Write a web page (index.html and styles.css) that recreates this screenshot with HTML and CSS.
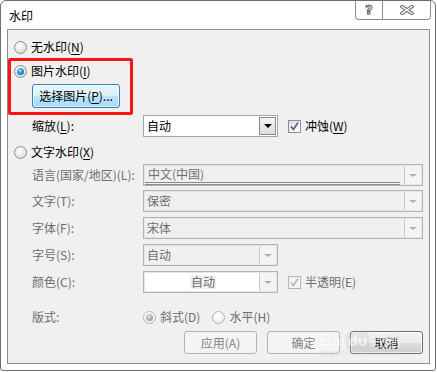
FILE: index.html
```html
<!DOCTYPE html>
<html>
<head>
  <meta charset="utf-8">
  <title>水印</title>
  <link rel="stylesheet" href="styles.css">
</head>
<body>
  <div class="window">
    <div class="titlebar">
      <span class="title">水印</span>
      <div class="caption-buttons">
        <span class="cap-btn help-btn">?</span>
        <span class="cap-btn close-btn">
          <svg width="14" height="10" viewBox="0 0 14 10">
            <path d="M2 1.5 L12 8.5 M12 1.5 L2 8.5" stroke="#6a6a6a" stroke-width="3.4" stroke-linecap="square" fill="none"/>
            <path d="M2 1.5 L12 8.5 M12 1.5 L2 8.5" stroke="#fff" stroke-width="1.4" stroke-linecap="square" fill="none"/>
          </svg>
        </span>
      </div>
    </div>

    <div class="client">
      <div class="option-row row-none">
        <span class="radio"></span>
        <span>无水印(<u>N</u>)</span>
      </div>
      <div class="option-row row-picture">
        <span class="radio checked"></span>
        <span>图片水印(<u>I</u>)</span>
      </div>
      <div class="pick-row">
        <button class="btn btn-hot">选择图片(<u>P</u>)...</button>
      </div>

      <div class="field-row row-scale">
        <span class="label">缩放(<u>L</u>):</span>
        <div class="combo combo-small">
          <span class="combo-text">自动</span>
          <span class="combo-drop"><span class="arrow"></span></span>
        </div>
        <span class="check-item">
          <span class="check checked">
            <svg width="11" height="11" viewBox="0 0 11 11"><path d="M2 5.5 L4.5 8.5 L9 1.5" stroke="#4a5f97" stroke-width="1.6" fill="none"/></svg>
          </span>
          <span>冲蚀(<u>W</u>)</span>
        </span>
      </div>

      <div class="option-row row-text">
        <span class="radio"></span>
        <span>文字水印(<u>X</u>)</span>
      </div>

      <div class="field-row row-lang disabled">
        <span class="label">语言(国家/地区)(L):</span>
        <div class="combo combo-wide">
          <span class="combo-text underlined">中文(中国)</span>
          <span class="combo-drop"><span class="arrow"></span></span>
        </div>
      </div>
      <div class="field-row row-gap4 disabled">
        <span class="label">文字(T):</span>
        <div class="combo combo-wide">
          <span class="combo-text">保密</span>
          <span class="combo-drop"><span class="arrow"></span></span>
        </div>
      </div>
      <div class="field-row row-gap5 disabled">
        <span class="label">字体(F):</span>
        <div class="combo combo-wide">
          <span class="combo-text">宋体</span>
          <span class="combo-drop"><span class="arrow"></span></span>
        </div>
      </div>
      <div class="field-row row-gap5 disabled">
        <span class="label">字号(S):</span>
        <div class="combo combo-small">
          <span class="combo-text">自动</span>
          <span class="combo-drop"><span class="arrow"></span></span>
        </div>
      </div>
      <div class="field-row row-gap5 disabled">
        <span class="label">颜色(C):</span>
        <div class="combo combo-small combo-color">
          <span class="combo-text"><span class="swatch-text">自动</span></span>
          <span class="combo-drop"><span class="arrow"></span></span>
        </div>
        <span class="check-item">
          <span class="check checked">
            <svg width="11" height="11" viewBox="0 0 11 11"><path d="M2 5.5 L4.5 8.5 L9 1.5" stroke="#b5b5b5" stroke-width="1.4" fill="none"/></svg>
          </span>
          <span>半透明(E)</span>
        </span>
      </div>

      <div class="field-row row-layout disabled">
        <span class="label">版式:</span>
        <span class="layout-option">
          <span class="radio checked"></span>
          <span>斜式(D)</span>
        </span>
        <span class="layout-option">
          <span class="radio"></span>
          <span>水平(H)</span>
        </span>
      </div>

      <div class="button-row">
        <button class="btn btn-dialog" disabled>应用(A)</button>
        <button class="btn btn-dialog" disabled>确定</button>
        <button class="btn btn-dialog btn-default">取消</button>
      </div>
    </div>

    <div class="highlight-box"></div>

    <div class="watermark">
      <span class="wm-bai">Bai</span><span class="wm-du">du</span><span class="wm-jy">经验</span>
      <span class="wm-url">jingyan.baidu.com</span>
    </div>
  </div>
</body>
</html>
```

FILE: styles.css
```css
* {
  box-sizing: border-box;
}

body {
  margin: 0;
  background-color: #fff;
  font-family: "Noto Sans CJK SC", "Microsoft YaHei", sans-serif;
  font-size: 12px;
  color: #000;
}

u {
  text-decoration: underline;
  text-underline-offset: 2px;
}

.window {
  position: relative;
  width: 436px;
  height: 371px;
  border: 1px solid #6e6e6e;
  border-radius: 6px 6px 3px 3px;
  background-color: #fff;
  display: flex;
  flex-direction: column;
}

/* Title bar */
.titlebar {
  height: 28px;
  display: flex;
  justify-content: space-between;
  align-items: flex-start;
  padding-left: 8px;
  padding-right: 4px;
}

.title {
  margin-top: 6px;
  line-height: 18px;
}

.caption-buttons {
  display: flex;
  height: 19px;
  border: 1px solid #8c8c8c;
  border-top: none;
  border-radius: 0 0 4px 4px;
  background-color: #fff;
}

.cap-btn {
  display: flex;
  align-items: center;
  justify-content: center;
}

.help-btn {
  width: 27px;
  border-right: 1px solid #8c8c8c;
  font-family: "DejaVu Sans", sans-serif;
  font-weight: bold;
  font-size: 13px;
  color: #fff;
  -webkit-text-stroke: 1px #5e5e5e;
  line-height: 18px;
}

.close-btn {
  width: 47px;
}

/* Client area */
.client {
  margin: 0 5px 0 6px;
  height: 335px;
  border: 1px solid #8e8f8f;
  background-color: #f0f0f0;
  display: flex;
  flex-direction: column;
  padding-top: 8px;
}

.option-row {
  height: 18px;
  display: flex;
  align-items: center;
  padding-left: 6px;
  line-height: 18px;
}

.option-row .radio {
  margin-right: 4px;
}

.row-picture {
  margin-top: 6px;
}

.row-text {
  margin-top: 6px;
}

.radio {
  display: inline-block;
  position: relative;
  width: 13px;
  height: 13px;
  border: 1px solid #8e8f8f;
  border-radius: 50%;
  background: radial-gradient(circle at 40% 35%, #ffffff 0%, #ececec 45%, #cfcfcf 100%);
  flex-shrink: 0;
}

.radio.checked::after {
  content: "";
  position: absolute;
  left: 2px;
  top: 2px;
  width: 7px;
  height: 7px;
  border-radius: 50%;
  background: radial-gradient(circle at 40% 35%, #8fe0ff 0%, #2a8ad4 50%, #0d4f8f 100%);
}

.disabled .radio {
  border-color: #b5b5b5;
  background: radial-gradient(circle at 40% 35%, #ffffff 0%, #f4f4f4 50%, #e2e2e2 100%);
}

.disabled .radio.checked::after {
  background: radial-gradient(circle at 40% 35%, #e0e0e0 0%, #a8a8a8 60%, #8e8e8e 100%);
}

.pick-row {
  margin-top: 4px;
  padding-left: 24px;
  height: 24px;
}

/* Buttons */
.btn {
  font-family: inherit;
  font-size: 12px;
  line-height: 18px;
  padding: 0;
  border-radius: 3px;
}

.btn-hot {
  width: 88px;
  height: 24px;
  border: 1px solid #3c7fb1;
  background: linear-gradient(#eaf6fd 0%, #d9f0fc 50%, #bee6fd 50%, #a7d9f5 100%);
  color: #000;
  box-shadow: inset 0 0 0 1px rgba(255, 255, 255, 0.6);
}

.btn-dialog {
  width: 73px;
  height: 23px;
  border: 1px solid #adb2b5;
  background-color: #f4f4f4;
  color: #838383;
}

.btn-default {
  border-color: #707070;
  background: linear-gradient(#f2f2f2 0%, #ebebeb 50%, #dddddd 50%, #cfcfcf 100%);
  color: #000;
  box-shadow: inset 0 0 0 1px rgba(255, 255, 255, 0.7);
}

/* Fields */
.field-row {
  height: 22px;
  display: flex;
  align-items: center;
  padding-left: 24px;
  line-height: 18px;
}

.field-row .label {
  width: 111px;
  flex-shrink: 0;
}

.row-scale {
  margin-top: 7px;
}

.row-lang {
  margin-top: 3px;
}

.row-gap4 {
  margin-top: 4px;
}

.row-gap5 {
  margin-top: 5px;
}

.row-layout {
  margin-top: 15px;
  height: 18px;
}

.disabled {
  color: #6d6d6d;
}

.combo {
  display: flex;
  height: 22px;
  border: 1px solid #a5a5a5;
  background-color: #fff;
}

.combo-small {
  width: 135px;
}

.combo-wide {
  width: 280px;
}

.combo-text {
  flex: 1;
  padding-left: 3px;
  line-height: 19px;
}

.combo-drop {
  width: 17px;
  margin: 1px;
  border: 1px solid #8b8b8b;
  background: linear-gradient(#f4f4f4, #dcdcdc);
  display: flex;
  align-items: center;
  justify-content: center;
}

.arrow {
  width: 0;
  height: 0;
  border-left: 4px solid transparent;
  border-right: 4px solid transparent;
  border-top: 4px solid #000;
}

.disabled .combo {
  border: 1px solid #b2b2b2;
  background-color: #f0f0f0;
  box-shadow: inset 0 0 0 1px #e6e6e6;
}

.disabled .combo-drop {
  margin: 1px 1px 1px 0;
  border: none;
  border-left: 1px solid #c8c8c8;
  background: #f4f4f4;
}

.disabled .arrow {
  border-top-color: #b0b0b0;
  border-left-width: 4px;
  border-right-width: 4px;
  border-top-width: 3px;
}

.underlined {
  margin: 1px 4px 0 1px;
  line-height: 16px;
  border-bottom: 3px double #8a8a8a;
}

.combo-color {
  background-color: #fff !important;
}

.combo-color .combo-text {
  display: flex;
  justify-content: center;
  align-items: center;
}

.swatch-text {
  background-color: #f0f0f0;
  padding: 0 1px;
  line-height: 14px;
}

.check-item {
  display: flex;
  align-items: center;
  margin-left: 10px;
}

.check {
  width: 13px;
  height: 13px;
  border: 1px solid #8e8f8f;
  background: linear-gradient(135deg, #dcdcdc, #ffffff);
  margin-right: 4px;
  display: flex;
  align-items: center;
  justify-content: center;
}

.disabled .check {
  border-color: #b5b5b5;
  background: #f4f4f4;
}

.layout-option {
  display: flex;
  align-items: center;
  margin-right: 12px;
}

.layout-option .radio {
  margin-right: 4px;
}

.button-row {
  margin-top: 5px;
  display: flex;
  justify-content: flex-end;
  gap: 10px;
  padding-right: 6px;
}

/* Red annotation frame */
.highlight-box {
  position: absolute;
  left: 7px;
  top: 57px;
  width: 125px;
  height: 57px;
  border: 3px solid #ff1414;
  border-radius: 2px;
}

/* Baidu watermark, faint over the corner */
.watermark {
  position: absolute;
  left: 318px;
  top: 326px;
  width: 110px;
  height: 40px;
  pointer-events: none;
  font-family: "Liberation Sans", sans-serif;
  opacity: 0.55;
}

.wm-bai {
  font-size: 17px;
  font-weight: bold;
  color: #fff;
  text-shadow: 0 0 1px #c4c4c4;
}

.wm-du {
  font-size: 15px;
  font-weight: bold;
  color: #fff;
  background-color: rgba(190, 190, 190, 0.45);
  border-radius: 3px;
  padding: 0 2px;
  margin-left: 1px;
}

.wm-jy {
  font-family: "Noto Sans CJK SC", sans-serif;
  font-size: 16px;
  color: #fff;
  text-shadow: 0 0 1px #c4c4c4;
  margin-left: 2px;
}

.wm-url {
  display: block;
  font-size: 9px;
  color: #d8d8d8;
  margin-top: -3px;
  letter-spacing: 0.5px;
}
```
